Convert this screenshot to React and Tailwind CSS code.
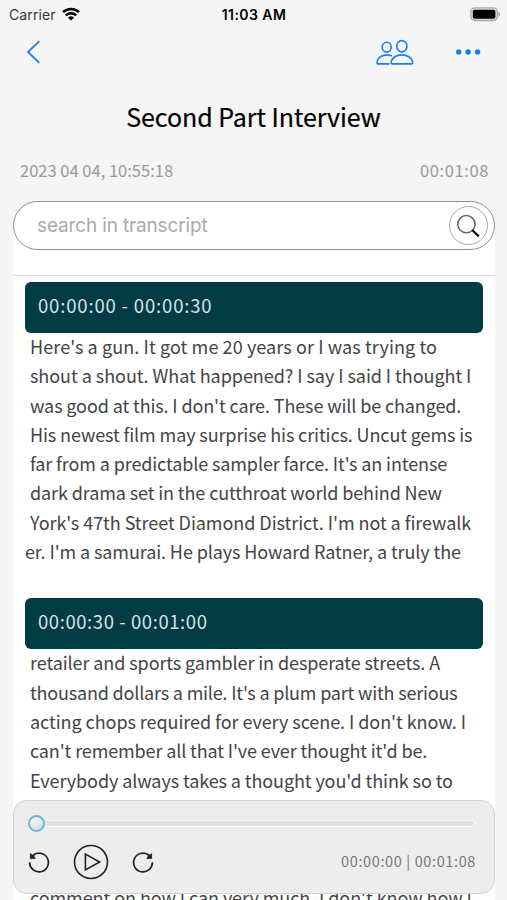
const sections = [
    {
        range: "00:00:00 - 00:00:30",
        track: "tracking-[0.84px]",
        lines: [
            { text: "Here's a gun. It got me 20 years or I was trying to", track: "tracking-[0.1px]" },
            { text: "shout a shout. What happened? I say I said I thought I", track: "tracking-[-0.05px]" },
            { text: "was good at this. I don't care. These will be changed.", track: "tracking-[-0.12px]" },
            { text: "His newest film may surprise his critics. Uncut gems is", track: "tracking-[-0.11px]" },
            { text: "far from a predictable sampler farce. It's an intense", track: "tracking-[-0.12px]" },
            { text: "dark drama set in the cutthroat world behind New", track: "tracking-[-0.11px]" },
            { text: "York's 47th Street Diamond District. I'm not a firewalk", track: "tracking-[-0.06px]" },
            { text: "er. I'm a samurai. He plays Howard Ratner, a truly the", track: "tracking-[-0.1px] -ml-[5px]" },
        ],
    },
    {
        range: "00:00:30 - 00:01:00",
        track: "tracking-[0.58px]",
        lines: [
            { text: "retailer and sports gambler in desperate streets. A", track: "tracking-[-0.09px]" },
            { text: "thousand dollars a mile. It's a plum part with serious", track: "tracking-[-0.19px]" },
            { text: "acting chops required for every scene. I don't know. I", track: "tracking-[-0.06px]" },
            { text: "can't remember all that I've ever thought it'd be.", track: "tracking-[-0.13px]" },
            { text: "Everybody always takes a thought you'd think so to", track: "tracking-[-0.1px]" },
            { text: "comment on how I can very much. I don't know how I", track: "tracking-[-0.07px] mt-[88px]" },
        ],
    },
];

function StatusBar() {
    return (
        <div className="h-7 pl-[9px] pr-[6px] flex items-center justify-between font-['Inter',sans-serif] text-black">
            <div className="w-[178px] flex items-center gap-[6px]">
                <span className="text-[14px] tracking-[0.1px] text-[#333]">Carrier</span>
                <svg width="18" height="14" viewBox="0 0 18 14" fill="none" stroke="currentColor" strokeWidth="2.5">
                    <path d="M1 5.2a11.5 11.5 0 0 1 16 0" />
                    <path d="M3.8 8.4a7.6 7.6 0 0 1 10.4 0" />
                    <path d="M9 13.6 6 10.7a4.3 4.3 0 0 1 6 0z" fill="currentColor" stroke="none" />
                </svg>
            </div>
            <span className="text-center text-[14px] font-semibold tracking-[0.45px] whitespace-nowrap">11:03 AM</span>
            <div className="w-[180px] flex justify-end">
                <svg width="31" height="15" viewBox="0 0 31 15">
                    <rect x="0.9" y="0.9" width="26.4" height="12.6" rx="3.8" fill="#e0e0e0" stroke="#aaa" strokeWidth="1.3" />
                    <rect x="2.8" y="2.7" width="22.6" height="9" rx="1.8" fill="#000" />
                    <path d="M28.4 4.9c2.4.6 2.4 4 0 4.6z" fill="#aaa" />
                </svg>
            </div>
        </div>
    );
}

function NavBar() {
    return (
        <div className="h-12 pl-[26px] pr-[26px] flex items-center justify-between text-[#1a7df0]">
            <svg width="15" height="24" viewBox="0 0 15 24" fill="none" stroke="currentColor" strokeWidth="1.8">
                <path d="M13.3 1.2 2 12l11.3 10.8" />
            </svg>
            <div className="flex items-center gap-[41px]">
                <svg width="38" height="26" viewBox="0 0 38 26" fill="none" stroke="currentColor" strokeWidth="1.6">
                    <ellipse cx="10.7" cy="8.2" rx="4.5" ry="4.9" />
                    <ellipse cx="25.8" cy="7.3" rx="5.1" ry="5.7" />
                    <path d="M15.8 16.9c-5.8-2.5-14.2.1-14.8 6.7-.1.9.3 1.3 1.2 1.3h11.2" />
                    <path d="M15.1 23.5c1.4-10.2 20-10.2 21.6 0 .1.9-.4 1.4-1.4 1.4H16.5c-1 0-1.5-.5-1.4-1.4z" />
                </svg>
                <svg width="26" height="8" viewBox="0 0 26 8" fill="currentColor">
                    <circle cx="3.7" cy="4" r="2.7" />
                    <circle cx="13.1" cy="4" r="2.7" />
                    <circle cx="22.6" cy="4" r="2.7" />
                </svg>
            </div>
        </div>
    );
}

function SearchField() {
    return (
        <div className="relative h-[49px] rounded-full border-[1.5px] border-[#8e8e8e] bg-white pl-[23px] pr-[6px] flex items-center justify-between">
            <span className="pt-[2px] font-['Inter',sans-serif] text-[19px] tracking-[-0.15px] text-[#aaa]">search in transcript</span>
            <div className="size-[39px] rounded-full border border-[#aaa] flex items-center justify-center">
                <svg width="24" height="24" viewBox="0 0 24 24" fill="none">
                    <circle cx="9.4" cy="10.2" r="8.6" stroke="#666" strokeWidth="1.5" />
                    <path d="m15.1 16 6.7 6.4" stroke="#111" strokeWidth="2.3" />
                </svg>
            </div>
        </div>
    );
}

function Section({ range, track, lines }) {
    return (
        <section className="mb-8 pl-3 pr-3">
            <div className="h-[51px] rounded-md bg-[#013b44] pl-[13px] pt-[10px] text-[18.5px] leading-[26px] text-[#d5e3e6]">
                <span className={track}>{range}</span>
            </div>
            <div className="-mt-px pl-[5px] text-[18px] leading-[29.3px] text-[#444] whitespace-nowrap">
                {lines.map((line) => (
                    <p key={line.text} className={line.track}>{line.text}</p>
                ))}
            </div>
        </section>
    );
}

function Player() {
    return (
        <div className="absolute left-[13px] right-[12px] top-[800px] h-[94px] rounded-[14px] border-[1.5px] border-[#d2d2d2] bg-[#ededed] px-[14px] pt-[14px]">
            <div className="flex items-center h-[17px]">
                <div className="size-[17px] shrink-0 rounded-full border-2 border-[#6bb8da] bg-linear-to-br from-[#fafafa] to-[#dddddd]" />
                <div className="h-[7px] w-[431px] mr-[5px] rounded-r-full border-[1.5px] border-l-0 border-[#f8f8f8] bg-[#e1e1e1]" />
            </div>
            <div className="mt-[12px] h-9 flex items-center text-[#222]">
                <svg width="22" height="24" viewBox="0 0 22 24" fill="none" stroke="currentColor" strokeWidth="1.7">
                    <path d="M1.6 12.3a9.4 9.4 0 1 0 4.2-7.6" />
                    <path d="M2.4 3.7v4.9h4.7l-1.2-2.3z" fill="currentColor" strokeWidth="0.8" />
                    <path d="m3.2 7.6 3-3.2" />
                </svg>
                <svg className="ml-[23px]" width="36" height="36" viewBox="0 0 36 36" fill="none" stroke="currentColor" strokeWidth="1.6">
                    <circle cx="18" cy="18" r="16.5" />
                    <path d="M12.4 10v16l14.2-8z" />
                </svg>
                <svg className="ml-[23px]" width="22" height="24" viewBox="0 0 22 24" fill="none" stroke="currentColor" strokeWidth="1.7">
                    <path d="M20.4 12.3a9.4 9.4 0 1 1-4.2-7.6" />
                    <path d="M19.6 3.7v4.9h-4.7l1.2-2.3z" fill="currentColor" strokeWidth="0.8" />
                    <path d="m18.8 7.6-3-3.2" />
                </svg>
                <span className="ml-auto mr-[4px] pb-[3px] text-[14.5px] tracking-[0.62px] text-[#777] whitespace-nowrap">00:00:00 | 00:01:08</span>
            </div>
        </div>
    );
}

export default function App() {
    return (
        <div className="relative h-[900px] w-[507px] overflow-hidden bg-[#f5f5f5] font-['Noto_Sans_CJK_KR',sans-serif]">
            <StatusBar />
            <NavBar />
            <h1 className="mt-[22px] h-[36px] text-center text-[25px] leading-[36px] tracking-[-0.05px] text-black [-webkit-text-stroke:0.2px_black]">Second Part Interview</h1>
            <div className="mt-[24px] h-6 pl-[20px] pr-[18px] flex items-center justify-between text-[16.5px] text-[#999]">
                <span className="tracking-[0px]">2023 04 04, 10:55:18</span>
                <span className="tracking-[0.6px]">00:01:08</span>
            </div>
            <main className="mt-[19px] ml-[13px] mr-[12px]">
                <SearchField />
                <div className="-mt-6 pt-6 bg-white">
                    <div className="h-[25px]" />
                    <div className="border-t border-[#ddd] pt-[6px]">
                        {sections.map((section) => (
                            <Section key={section.range} {...section} />
                        ))}
                    </div>
                </div>
            </main>
            <Player />
        </div>
    );
}
